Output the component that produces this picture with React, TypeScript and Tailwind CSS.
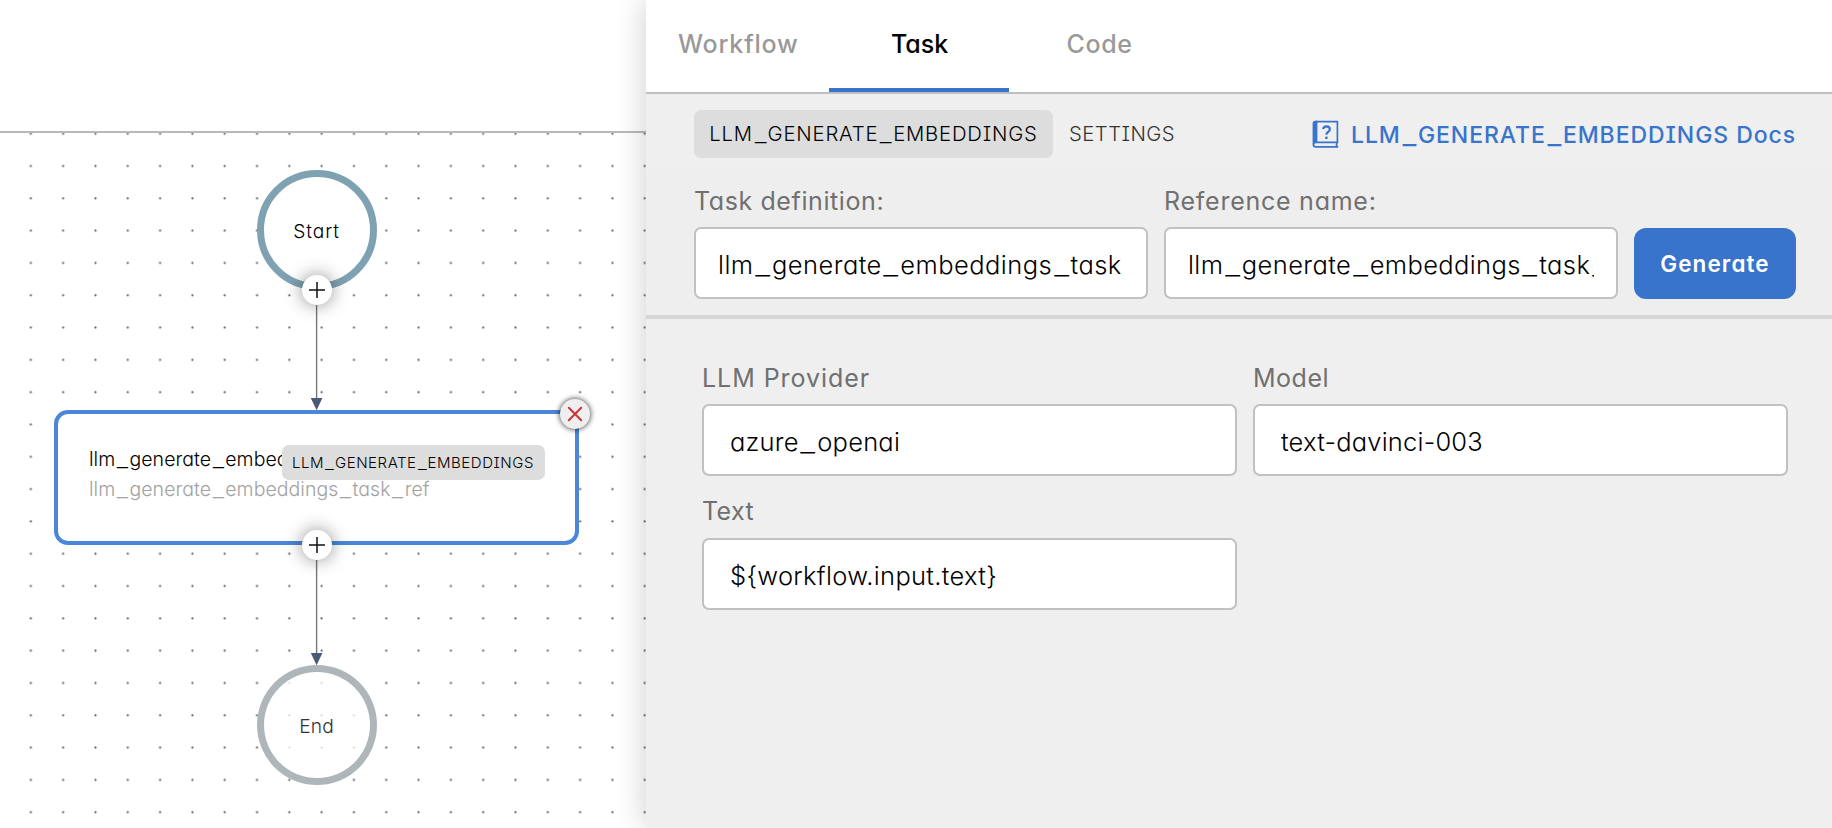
import React, { Fragment, ReactNode } from "react";

/** Identifier text whose underscores are drawn wide, with air on both sides. */
function Ident({ children }: { children: string }) {
  const parts = children.split("_");
  return (
    <>
      {parts.map((part, i) => (
        <Fragment key={i}>
          {i > 0 && <span className="mx-[0.14em] inline-block translate-y-[0.04em] scale-x-[1.3] tracking-normal">_</span>}
          {part}
        </Fragment>
      ))}
    </>
  );
}

function DotGrid() {
  return (
    <svg className="absolute inset-0 h-full w-full" aria-hidden="true">
      <defs>
        <pattern id="dots" x="14.7" y="16.95" width="32.31" height="32.31" patternUnits="userSpaceOnUse">
          <circle cx="16.15" cy="16.15" r="1.1" fill="#5f5f5f" />
        </pattern>
      </defs>
      <rect width="100%" height="100%" fill="url(#dots)" />
    </svg>
  );
}

function Edges() {
  return (
    <svg className="absolute inset-0 h-full w-full" aria-hidden="true">
      <g stroke="#777" strokeWidth="1.4">
        <path d="M316.6 172V268" />
        <path d="M316.6 427V523" />
      </g>
      <g fill="#4a5a76">
        <path d="M310.8 265H322.4L316.6 277.3Z" />
        <path d="M310.8 520H322.4L316.6 532.3Z" />
      </g>
    </svg>
  );
}

function AddButton({ className }: { className: string }) {
  return (
    <button
      aria-label="Add task"
      className={
        "absolute left-[301.6px] flex size-[30px] items-center justify-center rounded-full bg-white shadow-[0_0_18px_rgba(0,0,0,0.45)] " +
        className
      }
    >
      <svg width="18" height="18" viewBox="0 0 18 18" stroke="#111" strokeWidth="1.5">
        <path d="M1 9H17M9 1V17" />
      </svg>
    </button>
  );
}

function Canvas() {
  return (
    <section className="flex w-[646px] shrink-0 flex-col bg-white">
      <div className="h-[133px] shrink-0 border-b-2 border-[#b9b9b9]" />
      <div className="relative flex-1 overflow-hidden">
        <DotGrid />
        <div className="absolute left-[256.6px] top-[37px] flex size-[120px] items-center justify-center rounded-full border-[7.5px] border-[#7ea2b2] bg-white pt-[3px] text-[19.2px] font-light tracking-[0.9px] text-black">
          Start
        </div>
        <div className="absolute left-[256.6px] top-[532px] flex size-[120px] items-center justify-center rounded-full border-[7.5px] border-[#aab2b6]/95 bg-white/75 pt-[3px] text-[19.2px] font-light tracking-[0.2px] text-[#333]">
          End
        </div>
        <div className="absolute left-[54px] top-[277px] h-[135px] w-[525px] rounded-[14px] border-[4.5px] border-[#4a86d9] bg-white pl-[31px] pt-[30px] text-[19.5px] leading-[30px] font-light tracking-[0.05px]">
          <div className="whitespace-nowrap text-black">
            <Ident>llm_generate_embeddings_task</Ident>
          </div>
          <div className="whitespace-nowrap text-[#a2a2a2]">
            <Ident>llm_generate_embeddings_task_ref</Ident>
          </div>
          <span className="absolute left-[223.5px] top-[30.5px] flex h-[35.5px] w-[263px] items-center justify-center whitespace-nowrap rounded-[7px] bg-[#ddd] pt-[1.5px] text-[15px] font-light tracking-[0.55px] text-black">
            <span>
              <Ident>LLM_GENERATE_EMBEDDINGS</Ident>
            </span>
          </span>
        </div>
        <Edges />
        <AddButton className="top-[142px]" />
        <AddButton className="top-[397px]" />
        <button
          aria-label="Remove task"
          className="absolute left-[559.6px] top-[266.3px] flex size-[30px] items-center justify-center rounded-full bg-[#efefef] shadow-[0_0_5px_1px_rgba(0,0,0,0.6)]"
        >
          <svg width="16" height="16" viewBox="0 0 16 16" stroke="#cb3434" strokeWidth="2" strokeLinecap="round">
            <path d="M1.8 1.8L14.2 14.2M14.2 1.8L1.8 14.2" />
          </svg>
        </button>
      </div>
    </section>
  );
}

function DocsIcon() {
  return (
    <svg width="27" height="28" viewBox="0 0 27 28" fill="none" stroke="#3874cc" strokeWidth="1.7">
      <path d="M0.6 3.6Q0.6 0.8 3.4 0.8H5.4V22.8H3.4Q1.4 23 0.6 24.4Z" fill="#3874cc" stroke="none" />
      <path d="M3 1.6H25.4V22.4H3.4Q1.4 22.8 1.4 24.6Q1.5 26.8 3.6 26.8H26.2" />
      <path d="M25 22.5Q24 24.6 25 26.8" />
      <path d="M11.2 9.2Q11.4 6.4 14.4 6.4Q17.8 6.5 17.8 9.3Q17.8 10.8 16 12Q14.4 13.1 14.4 14.8" strokeWidth="2.2" />
      <path d="M14.4 16.6V19" strokeWidth="2.4" />
    </svg>
  );
}

function Label({ children, className }: { children: ReactNode; className: string }) {
  return <div className={"whitespace-nowrap text-[25px] leading-[30px] text-[#707070] " + className}>{children}</div>;
}

function Box({ children, className }: { children: ReactNode; className: string }) {
  return (
    <div className={"h-[72px] rounded-[7px] border-2 border-[#c1c1c1] bg-white pt-[3px] text-[25.5px] font-light text-black " + className}>
      <div className="overflow-hidden whitespace-nowrap leading-[66px]">{children}</div>
    </div>
  );
}

export default function App() {
  return (
    <main className="flex h-[828px] w-[1832px] overflow-hidden bg-white font-['Inter',sans-serif] [font-feature-settings:'cv11','cv08']">
      <Canvas />
      <section className="relative flex flex-1 flex-col bg-[#efefef] shadow-[0_0_30px_rgba(0,0,0,0.2)]">
        <nav className="flex h-[94px] shrink-0 border-b-2 border-[#bfbfbf] bg-white text-[25px] leading-[88px] font-[450] text-[#999]">
          <div className="w-[183px] pl-[32px] tracking-[0.8px]">Workflow</div>
          <div className="w-[180px] border-b-4 border-[#3874cc] pl-[62px] tracking-[0px] text-black">Task</div>
          <div className="w-[180px] pl-[57.5px] tracking-[0.6px]">Code</div>
        </nav>

        <div className="flex h-[79px] shrink-0 items-center pl-[48px] pr-[36px] pt-[1px] text-[20.3px] font-light">
          <div className="flex h-[48px] w-[359px] items-center justify-center rounded-[7px] bg-[#ddd] whitespace-nowrap tracking-[0.8px] text-black">
            <span>
              <Ident>LLM_GENERATE_EMBEDDINGS</Ident>
            </span>
          </div>
          <div className="pl-[16px] tracking-[0.45px] text-[#333]">SETTINGS</div>
          <a className="ml-auto flex items-center gap-[12px] whitespace-nowrap text-[23px] font-[550] tracking-[0.93px] text-[#3874cc]">
            <DocsIcon />
            <span className="w-[445px] pt-[2px]">
              <Ident>LLM_GENERATE_EMBEDDINGS Docs</Ident>
            </span>
          </a>
        </div>

        <div className="flex h-[146px] shrink-0 items-end gap-[16px] border-b-4 border-[#d6d6d6] bg-[#eee] pb-[16px] pl-[48px] pr-[36px]">
          <div className="w-[454px]">
            <Label className="mb-[11px] tracking-[0.6px]">Task definition:</Label>
            <Box className="px-[22px] tracking-[0.44px]">
              <Ident>llm_generate_embeddings_task</Ident>
            </Box>
          </div>
          <div className="w-[454px]">
            <Label className="mb-[11px] tracking-[0.75px]">Reference name:</Label>
            <Box className="px-[22px] tracking-[0.38px]">
              <Ident>llm_generate_embeddings_task_ref</Ident>
            </Box>
          </div>
          <button className="h-[71px] w-[162px] rounded-[12px] bg-[#3874cc] pt-[1px] text-[22.5px] font-semibold tracking-[1.1px] text-white">
            Generate
          </button>
        </div>

        <div className="grid grid-cols-[535px_535px] gap-x-[16px] gap-y-[20px] pl-[56px] pt-[44px]">
          <div>
            <Label className="mb-[11px] tracking-[0.95px]">LLM Provider</Label>
            <Box className="px-[26px] tracking-[0.2px]">
              <Ident>azure_openai</Ident>
            </Box>
          </div>
          <div>
            <Label className="mb-[11px] tracking-[0.5px]">Model</Label>
            <Box className="px-[26px] tracking-[0.2px]">text-davinci-003</Box>
          </div>
          <div>
            <Label className="mb-[12px] tracking-[0.4px]">Text</Label>
            <Box className="px-[26px] tracking-[0.3px]">{"${workflow.input.text}"}</Box>
          </div>
        </div>
      </section>
    </main>
  );
}
